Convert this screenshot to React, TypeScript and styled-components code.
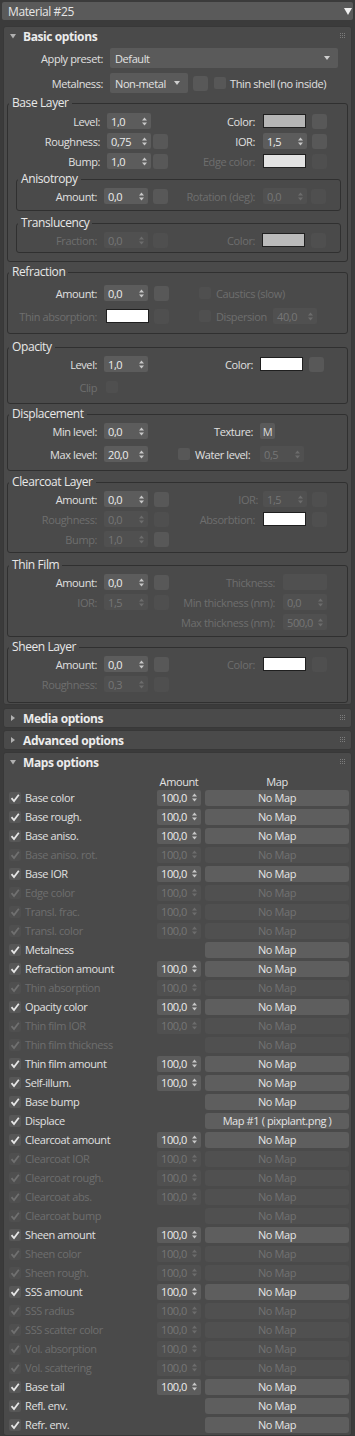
import React from "react";
import styled, { createGlobalStyle } from "styled-components";

const GlobalStyle = createGlobalStyle`
  html, body { margin: 0; padding: 0; background: #3b3b3b; }
  body {
    font-family: "Open Sans", "Liberation Sans", sans-serif;
    font-size: 11px;
    letter-spacing: -0.4px;
    color: #dedede;
  }
  * { box-sizing: border-box; }
`;

const TXT = "#e0e0e0";
const DIM = "#6e6e6e";

const Page = styled.div`
  width: 355px;
  min-height: 1436px;
  padding: 2px 2px 0 2px;
  display: flex;
  flex-direction: column;
`;

const TitleBar = styled.div`
  height: 18px;
  margin-bottom: 6px;
  background: #5a5a5a;
  border-radius: 2px;
  display: flex;
  align-items: center;
  justify-content: space-between;
  padding: 0 1px 0 6px;
  font-size: 12px;
  color: #e6e6e6;
`;

const Rollout = styled.section<{ $mt?: number }>`
  margin: ${(p) => p.$mt ?? 0}px 1px 0 1px;
  background: #4a4a4a;
  border: 1px solid #383838;
  border-radius: 3px;
`;

const RollHead = styled.div`
  height: 18px;
  display: flex;
  align-items: center;
  padding: 0 5px 0 6px;
  font-weight: 700;
  font-size: 12px;
  color: #ececec;
  span { flex: 1; margin-left: 7px; }
`;

const Body = styled.div`
  padding: 3px 3px 1px 3px;
  display: flex;
  flex-direction: column;
`;

const TopRow = styled.div<{ $mt?: number }>`
  display: flex;
  align-items: center;
  height: 20px;
  margin-top: ${(p) => p.$mt ?? 0}px;
`;

const Lbl = styled.span<{ $dim?: boolean; $w?: number; $pr?: number }>`
  ${(p) => (p.$w ? `width: ${p.$w}px; flex: none;` : "")}
  text-align: right;
  padding-right: ${(p) => p.$pr ?? 7}px;
  white-space: nowrap;
  color: ${(p) => (p.$dim ? DIM : TXT)};
`;

const Text = styled.span<{ $dim?: boolean; $ml?: number; $w?: number }>`
  margin-left: ${(p) => p.$ml ?? 0}px;
  ${(p) => (p.$w ? `width: ${p.$w}px; flex: none;` : "")}
  white-space: nowrap;
  color: ${(p) => (p.$dim ? DIM : TXT)};
`;

const Drop = styled.div<{ $w: number }>`
  width: ${(p) => p.$w}px;
  height: 20px;
  background: #5a5a5a;
  border-radius: 2px;
  display: flex;
  align-items: center;
  justify-content: space-between;
  padding: 0 8px 0 5px;
  color: #e2e2e2;
`;

const Group = styled.fieldset<{ $mt?: number; $pb?: number; $sub?: boolean }>`
  margin: ${(p) => p.$mt ?? 0}px ${(p) => (p.$sub ? "6px" : "0")} 0 ${(p) => (p.$sub ? "8px" : "0")};
  padding: 0 0 ${(p) => p.$pb ?? 6}px 0;
  border: 1px solid #303030;
  border-radius: 3px;
  min-width: 0;
`;

const Legend = styled.legend`
  margin-left: 1px;
  padding: 0 3px;
  font-size: 12px;
  line-height: 14px;
  color: #e8e8e8;
`;

const Rows = styled.div<{ $pt?: number; $gap?: number }>`
  display: flex;
  flex-direction: column;
  padding-top: ${(p) => p.$pt ?? 0}px;
  gap: ${(p) => p.$gap ?? 0}px;
`;

const Row = styled.div<{ $cols: string }>`
  display: grid;
  grid-template-columns: ${(p) => p.$cols};
  align-items: center;
  height: 20px;
`;

const Span = styled.div<{ $from: number; $pl?: number }>`
  grid-column: ${(p) => p.$from} / -1;
  display: flex;
  align-items: center;
  padding-left: ${(p) => p.$pl ?? 0}px;
`;

const SpinBox = styled.div<{ $dim?: boolean; $w: number; $ml?: number }>`
  width: ${(p) => p.$w}px;
  height: 16px;
  margin-left: ${(p) => p.$ml ?? 0}px;
  background: ${(p) => (p.$dim ? "#505050" : "#5c5c5c")};
  border-radius: 2px;
  display: flex;
  align-items: center;
  justify-content: space-between;
  padding: 0 4px 0 4px;
  color: ${(p) => (p.$dim ? "#767676" : "#ececec")};
`;

const Slot = styled.div<{ $dim?: boolean; $ml?: number }>`
  width: 15px;
  height: 15px;
  margin-left: ${(p) => p.$ml ?? 0}px;
  border-radius: 3px;
  background: ${(p) => (p.$dim ? "#4f4f4f" : "#585858")};
`;

const MBtn = styled.div`
  width: 15px;
  height: 16px;
  border-radius: 2px;
  background: #5a5a5a;
  color: #dcdcdc;
  font-size: 11px;
  display: flex;
  align-items: center;
  justify-content: center;
`;

const Swatch = styled.div<{ $c: string; $ml?: number }>`
  width: 43px;
  height: 14px;
  margin-left: ${(p) => p.$ml ?? 0}px;
  background: ${(p) => p.$c};
  border: 1px solid #1f1f1f;
`;

const Box = styled.div<{ $dim?: boolean; $ml?: number }>`
  width: 12px;
  height: 12px;
  flex: none;
  margin-left: ${(p) => p.$ml ?? 0}px;
  border-radius: 2px;
  background: ${(p) => (p.$dim ? "#4f4f4f" : "#575757")};
  display: flex;
  align-items: center;
  justify-content: center;
`;

/* maps rollout */
const MapGrid = styled.div`
  display: flex;
  flex-direction: column;
  padding: 3px 3px 1px 5px;
`;

const MapRow = styled.div<{ $h: number }>`
  display: grid;
  grid-template-columns: 12px 128px 44px 144px;
  column-gap: 4px;
  align-items: center;
  height: ${(p) => p.$h}px;
`;

const ColHead = styled.span`
  text-align: center;
  color: #e2e2e2;
  white-space: nowrap;
`;

const MapButton = styled.div<{ $dim?: boolean }>`
  height: 16px;
  border-radius: 3px;
  background: ${(p) => (p.$dim ? "#505050" : "#5e5e5e")};
  color: ${(p) => (p.$dim ? "#727272" : "#e4e4e4")};
  display: flex;
  align-items: center;
  justify-content: center;
  white-space: nowrap;
`;

const Arrows = ({ dim }: { dim?: boolean }) => (
  <svg width="5" height="9" viewBox="0 0 5 9" style={{ flex: "none" }}>
    <path d="M0 3.5 L2.5 0.5 L5 3.5Z M0 5.5 L2.5 8.5 L5 5.5Z" fill={dim ? "#6c6c6c" : "#c8c8c8"} />
  </svg>
);

const Spin = ({ v, dim, w = 44, ml }: { v: string; dim?: boolean; w?: number; ml?: number }) => (
  <SpinBox $dim={dim} $w={w} $ml={ml}>
    <span>{v}</span>
    <Arrows dim={dim} />
  </SpinBox>
);

const Check = ({ dim }: { dim?: boolean }) => (
  <svg width="10" height="10" viewBox="0 0 10 10">
    <path d="M1.5 5.2 L4 8 L8.8 1.8" fill="none" stroke={dim ? "#707070" : "#e6e6e6"} strokeWidth="1.8" />
  </svg>
);

const Grip = () => (
  <svg width="6" height="6" viewBox="0 0 6 6">
    {[0, 2, 4].map((x) =>
      [0, 2, 4].map((y) => <rect key={`${x}${y}`} x={x} y={y} width="1" height="1" fill="#7c7c7c" />)
    )}
  </svg>
);

const Tri = ({ open }: { open?: boolean }) =>
  open ? (
    <svg width="6" height="5" viewBox="0 0 6 5"><path d="M0 0 L6 0 L3 4.5Z" fill="#b0b0b0" /></svg>
  ) : (
    <svg width="6" height="6" viewBox="0 0 6 6"><path d="M1 0 L5 3 L1 6Z" fill="#b0b0b0" /></svg>
  );

const Head = ({ title, open }: { title: string; open?: boolean }) => (
  <RollHead>
    <Tri open={open} />
    <span>{title}</span>
    <Grip />
  </RollHead>
);

const BASE = "99px 46px 15px 95px 49px 15px";
const SUB = "87px 49px 15px 95px 48px 15px";
const STD = "96px 50px 15px 94px 49px 15px";
const OPA = "96px 50px 15px 91px 49px 15px";
const FILM = "96px 50px 15px 114px 44px";

type MapItem = [string, boolean, boolean, string?];

const maps: MapItem[] = [
  ["Base color", true, true],
  ["Base rough.", true, true],
  ["Base aniso.", true, true],
  ["Base aniso. rot.", false, true],
  ["Base IOR", true, true],
  ["Edge color", false, true],
  ["Transl. frac.", false, true],
  ["Transl. color", false, true],
  ["Metalness", true, false],
  ["Refraction amount", true, true],
  ["Thin absorption", false, true],
  ["Opacity color", true, true],
  ["Thin film IOR", false, true],
  ["Thin film thickness", false, false],
  ["Thin film amount", true, true],
  ["Self-illum.", true, true],
  ["Base bump", true, false],
  ["Displace", true, false, "Map #1 ( pixplant.png )"],
  ["Clearcoat amount", true, true],
  ["Clearcoat IOR", false, true],
  ["Clearcoat rough.", false, true],
  ["Clearcoat abs.", false, true],
  ["Clearcoat bump", false, false],
  ["Sheen amount", true, true],
  ["Sheen color", false, true],
  ["Sheen rough.", false, true],
  ["SSS amount", true, true],
  ["SSS radius", false, true],
  ["SSS scatter color", false, true],
  ["Vol. absorption", false, true],
  ["Vol. scattering", false, true],
  ["Base tail", true, true],
  ["Refl. env.", true, false],
  ["Refr. env.", true, false],
];

const Empty = styled.span``;

export default function App() {
  return (
    <>
      <GlobalStyle />
      <Page>
        <TitleBar>
          <span>Material #25</span>
          <svg width="8" height="7" viewBox="0 0 8 7"><path d="M0 0 L8 0 L4 7Z" fill="#f0f0f0" /></svg>
        </TitleBar>

        <Rollout>
          <Head title="Basic options" open />
          <Body>
            <TopRow>
              <Lbl $w={103}>Apply preset:</Lbl>
              <Drop $w={228}>
                <span>Default</span>
                <svg width="6" height="4" viewBox="0 0 6 4"><path d="M0 0 L6 0 L3 4Z" fill="#cfcfcf" /></svg>
              </Drop>
            </TopRow>
            <TopRow $mt={5}>
              <Lbl $w={103}>Metalness:</Lbl>
              <Drop $w={78}>
                <span>Non-metal</span>
                <svg width="6" height="4" viewBox="0 0 6 4"><path d="M0 0 L6 0 L3 4Z" fill="#cfcfcf" /></svg>
              </Drop>
              <Slot $ml={5} />
              <Box $ml={6} />
              <Text $ml={4}>Thin shell (no inside)</Text>
            </TopRow>

            <Group $mt={3} $pb={8}>
              <Legend>Base Layer</Legend>
              <Rows $pt={1}>
                <Row $cols={BASE}>
                  <Lbl>Level:</Lbl>
                  <Spin v="1,0" />
                  <Empty />
                  <Lbl $pr={8}>Color:</Lbl>
                  <Swatch $c="#b5b5b5" />
                  <Slot />
                </Row>
                <Row $cols={BASE}>
                  <Lbl>Roughness:</Lbl>
                  <Spin v="0,75" />
                  <Slot />
                  <Lbl $pr={8}>IOR:</Lbl>
                  <Spin v="1,5" />
                  <Slot />
                </Row>
                <Row $cols={BASE}>
                  <Lbl>Bump:</Lbl>
                  <Spin v="1,0" />
                  <Slot />
                  <Lbl $pr={8} $dim>Edge color:</Lbl>
                  <Swatch $c="#e2e2e2" />
                  <Slot $dim />
                </Row>
              </Rows>
              <Group $sub $mt={1} $pb={4}>
                <Legend>Anisotropy</Legend>
                <Row $cols={SUB}>
                  <Lbl>Amount:</Lbl>
                  <Spin v="0,0" />
                  <Slot />
                  <Lbl $pr={8} $dim>Rotation (deg):</Lbl>
                  <Spin v="0,0" dim />
                  <Slot $dim />
                </Row>
              </Group>
              <Group $sub $mt={5} $pb={2}>
                <Legend>Translucency</Legend>
                <Row $cols={SUB}>
                  <Lbl $dim>Fraction:</Lbl>
                  <Spin v="0,0" dim />
                  <Slot $dim />
                  <Lbl $pr={8} $dim>Color:</Lbl>
                  <Swatch $c="#bababa" $ml={-1} />
                  <Slot $dim />
                </Row>
              </Group>
            </Group>

            <Group $mt={3} $pb={7}>
              <Legend>Refraction</Legend>
              <Rows $pt={4} $gap={3}>
                <Row $cols={STD}>
                  <Lbl>Amount:</Lbl>
                  <Spin v="0,0" />
                  <Slot />
                  <Span $from={4} $pl={30}>
                    <Box $dim />
                    <Text $dim $ml={5}>Caustics (slow)</Text>
                  </Span>
                </Row>
                <Row $cols={STD}>
                  <Lbl $dim>Thin absorption:</Lbl>
                  <Swatch $c="#ffffff" $ml={2} />
                  <Slot $dim />
                  <Span $from={4} $pl={30}>
                    <Box $dim />
                    <Text $dim $ml={5} $w={57}>Dispersion</Text>
                    <Spin v="40,0" dim />
                  </Span>
                </Row>
              </Rows>
            </Group>

            <Group $mt={6} $pb={6}>
              <Legend>Opacity</Legend>
              <Rows $gap={3}>
                <Row $cols={OPA}>
                  <Lbl>Level:</Lbl>
                  <Spin v="1,0" />
                  <Empty />
                  <Lbl>Color:</Lbl>
                  <Swatch $c="#ffffff" />
                  <Slot />
                </Row>
                <Row $cols={OPA}>
                  <Lbl $dim>Clip</Lbl>
                  <Box $dim $ml={2} />
                </Row>
              </Rows>
            </Group>

            <Group $mt={3} $pb={6}>
              <Legend>Displacement</Legend>
              <Rows $gap={3}>
                <Row $cols={OPA}>
                  <Lbl>Min level:</Lbl>
                  <Spin v="0,0" />
                  <Empty />
                  <Lbl>Texture:</Lbl>
                  <MBtn>M</MBtn>
                </Row>
                <Row $cols={OPA}>
                  <Lbl>Max level:</Lbl>
                  <Spin v="20,0" />
                  <Empty />
                  <Span $from={4} $pl={9}>
                    <Box />
                    <Text $ml={5} $w={65}>Water level:</Text>
                    <Spin v="0,5" dim />
                  </Span>
                </Row>
              </Rows>
            </Group>

            <Group $mt={4} $pb={3}>
              <Legend>Clearcoat Layer</Legend>
              <Row $cols={STD}>
                <Lbl>Amount:</Lbl>
                <Spin v="0,0" />
                <Slot />
                <Lbl $dim $pr={5}>IOR:</Lbl>
                <Spin v="1,5" dim />
                <Slot $dim />
              </Row>
              <Row $cols={STD}>
                <Lbl $dim>Roughness:</Lbl>
                <Spin v="0,0" dim />
                <Slot $dim />
                <Lbl $dim $pr={8}>Absorbtion:</Lbl>
                <Swatch $c="#ffffff" />
                <Slot $dim />
              </Row>
              <Row $cols={STD}>
                <Lbl $dim>Bump:</Lbl>
                <Spin v="1,0" dim />
                <Slot />
              </Row>
            </Group>

            <Group $mt={5} $pb={4}>
              <Legend>Thin Film</Legend>
              <Row $cols={FILM}>
                <Lbl>Amount:</Lbl>
                <Spin v="0,0" />
                <Slot />
                <Lbl $dim $pr={8}>Thickness:</Lbl>
                <SpinBox $dim $w={44} />
              </Row>
              <Row $cols={FILM}>
                <Lbl $dim>IOR:</Lbl>
                <Spin v="1,5" dim />
                <Slot $dim />
                <Lbl $dim $pr={8}>Min thickness (nm):</Lbl>
                <Spin v="0,0" dim />
              </Row>
              <Row $cols={FILM}>
                <Empty />
                <Empty />
                <Empty />
                <Lbl $dim $pr={8}>Max thickness (nm):</Lbl>
                <Spin v="500,0" dim />
              </Row>
            </Group>

            <Group $mt={3} $pb={8}>
              <Legend>Sheen Layer</Legend>
              <Row $cols={STD}>
                <Lbl>Amount:</Lbl>
                <Spin v="0,0" />
                <Slot />
                <Lbl $dim $pr={8}>Color:</Lbl>
                <Swatch $c="#ffffff" />
                <Slot $dim />
              </Row>
              <Row $cols={STD}>
                <Lbl $dim>Roughness:</Lbl>
                <Spin v="0,3" dim />
                <Slot $dim />
              </Row>
            </Group>
          </Body>
        </Rollout>

        <Rollout $mt={3}>
          <Head title="Media options" />
        </Rollout>
        <Rollout $mt={2}>
          <Head title="Advanced options" />
        </Rollout>

        <Rollout $mt={2}>
          <Head title="Maps options" open />
          <MapGrid>
            <MapRow $h={14}>
              <Empty />
              <Empty />
              <ColHead>Amount</ColHead>
              <ColHead>Map</ColHead>
            </MapRow>
            {maps.map(([label, on, amount, map]) => (
              <MapRow key={label} $h={19}>
                <Box $dim={!on}>
                  <Check dim={!on} />
                </Box>
                <Text $dim={!on}>{label}</Text>
                {amount ? <Spin v="100,0" dim={!on} /> : <Empty />}
                <MapButton $dim={!on}>{map ?? "No Map"}</MapButton>
              </MapRow>
            ))}
          </MapGrid>
        </Rollout>
      </Page>
    </>
  );
}
